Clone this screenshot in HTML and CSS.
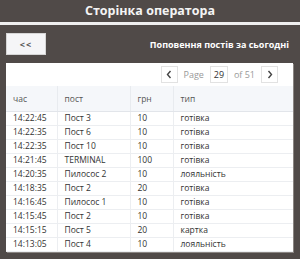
FILE: index.html
```html
<!DOCTYPE html>
<html lang="uk">
<head>
    <meta charset="UTF-8">
    <title>Сторінка оператора</title>
    <link rel="stylesheet" href="styles.css">
</head>
<body>

    <div class="topbar">Сторінка оператора</div>
    <div class="strip"></div>

    <div class="toolbar">
        <button class="back">&lt;&lt;</button>
        <h2>Поповення постів за сьогодні</h2>
    </div>

    <div class="panel">
        <div class="pager">
            <button class="nav">
                <svg width="6" height="9" viewBox="0 0 6 9"><path d="M4.5 1 L1.5 4.5 L4.5 8" fill="none" stroke="#444" stroke-width="1.4"/></svg>
            </button>
            <span class="lbl">Page</span>
            <span class="pagenum">29</span>
            <span class="lbl">of 51</span>
            <button class="nav">
                <svg width="6" height="9" viewBox="0 0 6 9"><path d="M1.5 1 L4.5 4.5 L1.5 8" fill="none" stroke="#444" stroke-width="1.4"/></svg>
            </button>
        </div>

        <table>
            <thead>
                <tr><th class="c1">час</th><th class="c2">пост</th><th class="c3">грн</th><th>тип</th></tr>
            </thead>
            <tbody>
                <tr><td>14:22:45</td><td>Пост 3</td><td>10</td><td>готівка</td></tr>
                <tr><td>14:22:35</td><td>Пост 6</td><td>10</td><td>готівка</td></tr>
                <tr><td>14:22:35</td><td>Пост 10</td><td>10</td><td>готівка</td></tr>
                <tr><td>14:21:45</td><td>TERMINAL</td><td>100</td><td>готівка</td></tr>
                <tr><td>14:20:35</td><td>Пилосос 2</td><td>10</td><td>лояльність</td></tr>
                <tr><td>14:18:35</td><td>Пост 2</td><td>20</td><td>готівка</td></tr>
                <tr><td>14:16:45</td><td>Пилосос 1</td><td>10</td><td>готівка</td></tr>
                <tr><td>14:15:45</td><td>Пост 2</td><td>10</td><td>готівка</td></tr>
                <tr><td>14:15:15</td><td>Пост 5</td><td>20</td><td>картка</td></tr>
                <tr><td>14:13:05</td><td>Пост 4</td><td>10</td><td>лояльність</td></tr>
            </tbody>
        </table>
    </div>

</body>
</html>
```

FILE: styles.css
```css
body { margin: 0; background: #504a48; font-family: "Open Sans", "DejaVu Sans", sans-serif; height: 259px; overflow: hidden; }
.topbar { height: 22px; line-height: 21px; text-align: center; color: #f4f4f4; font-weight: bold; font-size: 12.5px; }
.strip { height: 3px; background: #efefef; }
.toolbar { display: flex; align-items: center; justify-content: space-between; padding: 8px 11px 0 6px; height: 22px; }
.back { width: 40px; height: 22px; background: #f5f5f7; border: 1px solid #d6d6d6; font-size: 9px; color: #555; font-family: inherit; font-weight: bold; padding: 0; letter-spacing: 1px; }
.toolbar h2 { margin: 0; color: #fff; font-size: 9px; font-weight: bold; }
.panel { margin: 8px 7px 0 6px; background: #fff; height: 189px; box-shadow: 1px 1px 0 #8a8582; overflow: hidden; }
.pager { display: flex; align-items: center; justify-content: flex-end; gap: 6px; height: 23px; padding-right: 15px; font-size: 9px; color: #999; }
.nav { width: 17px; height: 17px; border: 1px solid #e2e2e2; background: #fff; padding: 0; display: flex; align-items: center; justify-content: center; }
.pagenum { width: 18px; height: 17px; border: 1px solid #e2e2e2; box-sizing: border-box; text-align: center; line-height: 15px; color: #333; font-size: 9px; }
.lbl { color: #999; }
table { width: 100%; border-collapse: collapse; table-layout: fixed; font-size: 8.5px; color: #333; }
th { background: #f5f7fa; font-weight: normal; text-align: left; color: #555; height: 25px; padding: 0 7px; border-right: 1px solid #e8ebef; border-bottom: 1px solid #e2e5ea; box-sizing: border-box; }
th:last-child, td:last-child { border-right: none; }
.c1 { width: 51px; }
.c2 { width: 73px; }
.c3 { width: 43px; }
td { height: 13px; padding: 0 7px; border-right: 1px solid #eceef1; border-bottom: 1px solid #eceef1; line-height: 12px; white-space: nowrap; }
```
